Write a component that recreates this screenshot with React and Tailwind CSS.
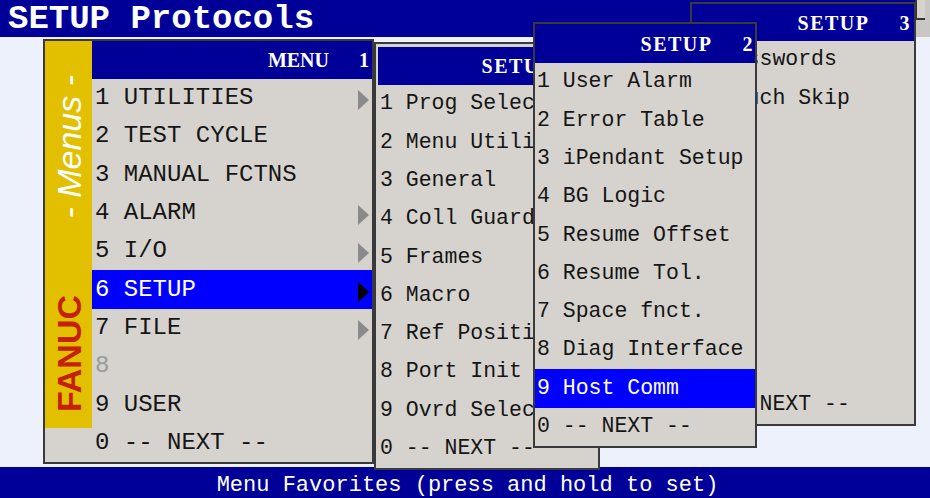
import React from "react";

const mono = { fontFamily: '"Liberation Mono", "DejaVu Sans Mono", monospace' };

const menu1 = [
  { n: "1", t: "UTILITIES", arrow: true },
  { n: "2", t: "TEST CYCLE" },
  { n: "3", t: "MANUAL FCTNS" },
  { n: "4", t: "ALARM", arrow: true },
  { n: "5", t: "I/O", arrow: true },
  { n: "6", t: "SETUP", arrow: true, sel: true },
  { n: "7", t: "FILE", arrow: true },
  { n: "8", t: "", dim: true },
  { n: "9", t: "USER" },
  { n: "0", t: "-- NEXT --" },
];

const menu2 = [
  "1 Prog Select",
  "2 Menu Utility",
  "3 General",
  "4 Coll Guard",
  "5 Frames",
  "6 Macro",
  "7 Ref Position",
  "8 Port Init",
  "9 Ovrd Select",
  "0 -- NEXT --",
];

const menu3 = [
  "1 User Alarm",
  "2 Error Table",
  "3 iPendant Setup",
  "4 BG Logic",
  "5 Resume Offset",
  "6 Resume Tol.",
  "7 Space fnct.",
  "8 Diag Interface",
  "9 Host Comm",
  "0 -- NEXT --",
];

const menu4 = [
  "1 Passwords",
  "2 Touch Skip",
  "",
  "",
  "",
  "",
  "",
  "",
  "",
  "0 -- NEXT --",
];

function Arrow({ dark }) {
  return (
    <svg width="11" height="20" viewBox="0 0 11 20" className="mr-[3px] mt-[4px] shrink-0">
      <polygon points="0,0 11,10 0,20" fill={dark ? "#000000" : "#8a8a8a"} />
    </svg>
  );
}

function Header({ title, num, className }) {
  return (
    <div
      className={"flex items-center justify-end bg-[#000099] text-white font-bold text-[20px] leading-none " + className}
      style={{ fontFamily: '"Liberation Serif", "Times New Roman", serif' }}
    >
      <span>{title}</span>
      <span className="ml-[30px]">{num}</span>
    </div>
  );
}

function SmallMenu({ items, sel, className, headerClass, title, num, textPad }) {
  return (
    <div className={"absolute border-2 border-[#3a3a3a] bg-[#d6d3ce] flex flex-col overflow-hidden " + className}>
      <Header title={title} num={num} className={headerClass} />
      {items.map((t, i) => (
        <div
          key={i}
          className={
            "h-[38.3px] shrink-0 flex items-center whitespace-pre overflow-hidden text-[21.5px] leading-none " +
            textPad +
            (i === sel ? " bg-[#0000ff] text-white" : " text-[#151515]")
          }
          style={mono}
        >
          {t}
        </div>
      ))}
    </div>
  );
}

export default function App() {
  return (
    <div className="relative w-[930px] h-[498px] overflow-hidden bg-[#edf1fc] flex flex-col">
      {/* title bar */}
      <div className="h-[37px] shrink-0 flex">
        <div className="flex-1 bg-[#000099] flex items-center pl-[8px]">
          <span className="text-white font-bold text-[34px] leading-none" style={mono}>
            SETUP Protocols
          </span>
        </div>
        <div className="w-[15px] bg-[#c9c7c3]">
          <div className="w-[10px] h-[20px] border-l-2 border-b-2 border-[#333] bg-[#d6d3ce]"></div>
        </div>
      </div>

      <div className="flex-1"></div>

      {/* bottom bar */}
      <div className="h-[31px] shrink-0 bg-[#000099] flex justify-center pt-[8px] pl-[5px]">
        <span className="text-white text-[22px] leading-none" style={mono}>
          Menu Favorites (press and hold to set)
        </span>
      </div>

      {/* MENU 1 */}
      <div className="absolute left-[43px] top-[39px] w-[331px] h-[425px] border-2 border-[#3a3a3a] bg-[#d6d3ce] flex">
        <div className="w-[47px] shrink-0">
          <div className="h-[387px] bg-[#e2c000] flex flex-col items-center pt-[34px] pb-[16px]">
            <span
              className="[writing-mode:vertical-rl] rotate-180 text-white italic text-[34px] leading-none whitespace-pre"
              style={{ fontFamily: '"Liberation Sans", Arial, sans-serif' }}
            >
              - Menus -
            </span>
            <span
              className="mt-auto [writing-mode:vertical-rl] rotate-180 text-[#c42100] font-bold text-[34px] leading-none"
              style={{ fontFamily: '"Liberation Sans", Arial, sans-serif' }}
            >
              FANUC
            </span>
          </div>
        </div>
        <div className="flex-1 flex flex-col">
          <Header title="MENU" num="1" className="h-[38px] shrink-0 pr-[3px]" />
          {menu1.map((it) => (
            <div
              key={it.n}
              className={
                "h-[38.3px] shrink-0 flex items-center pl-[3px] text-[24px] leading-none whitespace-pre " +
                (it.sel ? "bg-[#0000ff] text-white" : "text-[#151515]")
              }
              style={mono}
            >
              <span className={it.dim ? "text-[#9a9a9a]" : ""}>{it.n}</span>
              <span className="flex-1">{it.t ? " " + it.t : ""}</span>
              {it.arrow && <Arrow dark={it.sel} />}
            </div>
          ))}
        </div>
      </div>

      {/* SETUP 1 */}
      <SmallMenu
        items={menu2}
        sel={-1}
        title="SETUP"
        num="1"
        className="left-[374px] top-[42px] w-[226px] h-[428px] pt-[3px] pl-[2px]"
        headerClass="h-[38px] shrink-0 pr-[3px] tracking-[1.5px]"
        textPad="pl-[2px]"
      />

      {/* SETUP 3 */}
      <SmallMenu
        items={menu4}
        sel={-1}
        title="SETUP"
        num="3"
        className="left-[690px] top-[2px] w-[226px] h-[424px]"
        headerClass="h-[37px] shrink-0 pr-[3px] tracking-[1.5px]"
        textPad="pl-[3px]"
      />

      {/* SETUP 2 */}
      <SmallMenu
        items={menu3}
        sel={8}
        title="SETUP"
        num="2"
        className="left-[533px] top-[22px] w-[224px] h-[426px]"
        headerClass="h-[39px] shrink-0 pr-[1px] tracking-[1.5px]"
        textPad="pl-[2px]"
      />
    </div>
  );
}
